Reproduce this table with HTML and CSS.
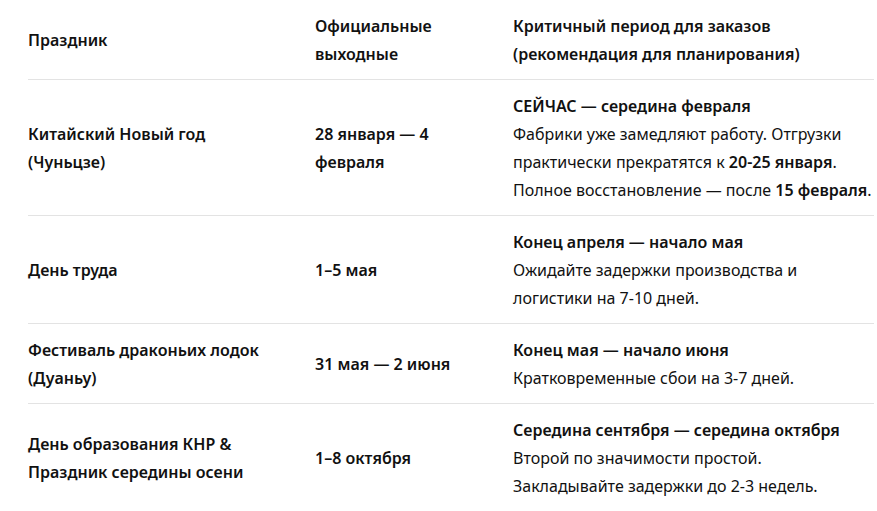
FILE: index.html
```html
<!DOCTYPE html>
<html lang="ru">
<head>
<meta charset="utf-8">
<link rel="stylesheet" href="styles.css">
</head>
<body>
<table class="holidays">
  <colgroup>
    <col class="c1">
    <col class="c2">
    <col class="c3">
  </colgroup>
  <thead>
    <tr>
      <th>Праздник</th>
      <th>Официальные<br>выходные</th>
      <th>Критичный период для заказов<br>(рекомендация для планирования)</th>
    </tr>
  </thead>
  <tbody>
    <tr>
      <td class="name">Китайский Новый год<br>(Чуньцзе)</td>
      <td class="dates">28 января — 4<br>февраля</td>
      <td class="period"><strong>СЕЙЧАС — середина февраля</strong><br>Фабрики уже замедляют работу. Отгрузки<br>практически прекратятся к <strong>20-25 января</strong>.<br>Полное восстановление — после <strong>15 февраля</strong>.</td>
    </tr>
    <tr>
      <td class="name">День труда</td>
      <td class="dates">1–5 мая</td>
      <td class="period"><strong>Конец апреля — начало мая</strong><br>Ожидайте задержки производства и<br>логистики на 7-10 дней.</td>
    </tr>
    <tr>
      <td class="name">Фестиваль драконьих лодок<br>(Дуаньу)</td>
      <td class="dates">31 мая — 2 июня</td>
      <td class="period"><strong>Конец мая — начало июня</strong><br>Кратковременные сбои на 3-7 дней.</td>
    </tr>
    <tr>
      <td class="name">День образования КНР &amp;<br>Праздник середины осени</td>
      <td class="dates">1–8 октября</td>
      <td class="period"><strong>Середина сентября — середина октября</strong><br>Второй по значимости простой.<br>Закладывайте задержки до 2-3 недель.</td>
    </tr>
  </tbody>
</table>
</body>
</html>
```

FILE: styles.css
```css
html, body {
  margin: 0;
  padding: 0;
  background: #ffffff;
}

body {
  font-family: "Noto Sans", "Open Sans", sans-serif;
  font-size: 16px;
  line-height: 28px;
  color: #111111;
}

.holidays {
  margin-left: 28px;
  width: 846px;
  border-collapse: collapse;
  table-layout: fixed;
}

.c1 { width: 287px; }
.c2 { width: 198px; }

.holidays th,
.holidays td {
  padding: 12px 0 11px 0;
  text-align: left;
  vertical-align: middle;
  border-bottom: 1px solid #e3e3e3;
  white-space: nowrap;
}

.holidays th {
  font-weight: 600;
}

.holidays tbody tr:last-child td {
  border-bottom: none;
}

.name,
.dates {
  font-weight: 600;
}

.period {
  font-weight: 400;
}

.period strong {
  font-weight: 600;
}
```
